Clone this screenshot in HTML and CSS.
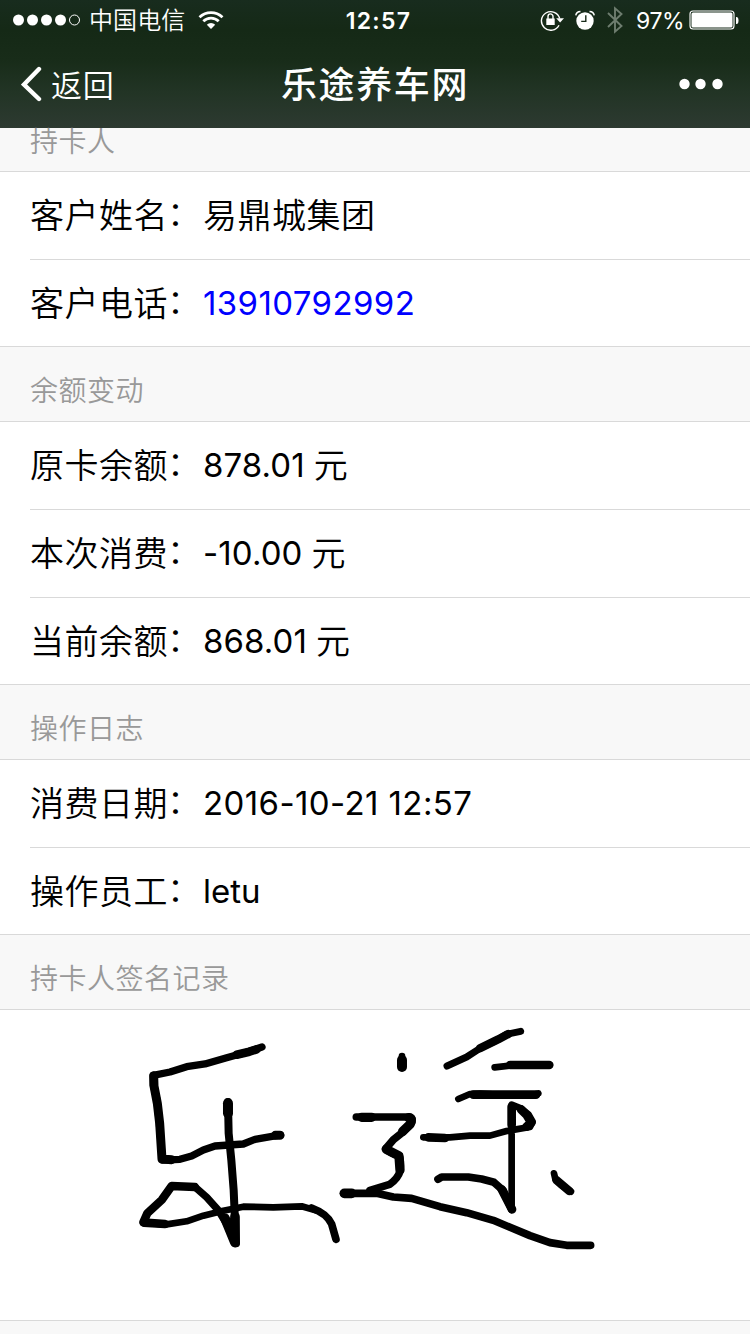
FILE: index.html
```html
<!DOCTYPE html>
<html lang="zh-CN">
<head>
<meta charset="utf-8">
<title>乐途养车网</title>
<link rel="stylesheet" href="styles.css">
</head>
<body>
<header class="top">
  <div class="status">
    <div class="status-left">
      <svg class="signal" width="68" height="12" viewBox="0 0 68 12" fill="#fff"><circle cx="5.5" cy="6" r="5.5"/><circle cx="19.5" cy="6" r="5.5"/><circle cx="33.5" cy="6" r="5.5"/><circle cx="47.5" cy="6" r="5.5"/><circle cx="61.5" cy="6" r="5" fill="none" stroke="#fff"/></svg>
      <span class="carrier">中国电信</span>
      <svg class="wifi" width="26" height="20" viewBox="0 0 26 20" fill="none" stroke="#fff" stroke-width="2.7"><path d="M1.5 7.2a16.5 16.5 0 0 1 23 0"/><path d="M5.3 11.2a11 11 0 0 1 15.4 0"/><path d="M13 19l-4.2-4.3a6 6 0 0 1 8.4 0z" fill="#fff" stroke="none"/></svg>
    </div>
    <span class="clock">12:57</span>
    <div class="status-right">
      <svg class="lock" width="24" height="22" viewBox="0 0 24 22"><path d="M19 16.200A9.300 9.300 0 1 1 19.700 9.500" fill="none" stroke="#fff" stroke-width="1.400"/><path d="M16.200 9.200H24l-3.900 4.300z" fill="#fff"/><rect x="6.300" y="9.500" width="8.400" height="6.500" fill="#fff"/><path d="M8 10V7.400a2.500 2.500 0 0 1 5 0V10" fill="none" stroke="#fff" stroke-width="1.400"/></svg>
      <svg class="alarm" width="20" height="20" viewBox="0 0 20 20"><circle cx="10" cy="11" r="8.700" fill="#fff"/><path d="M.8 5.300Q1.200 1.600 5.500 1.400M19.200 5.300Q18.800 1.600 14.500 1.400" fill="none" stroke="#fff" stroke-width="1.500"/><path d="M10.800 5.200v6.200H6.200" fill="none" stroke="#182b19" stroke-width="1.400"/></svg>
      <svg class="bluetooth" width="16" height="28" viewBox="0 0 16 28" fill="none" stroke="#6e7d6f" stroke-width="1.900"><path d="M1 7l13.500 13L8 25.600V2.400L14.500 8 1 21"/></svg>
      <span class="percent">97%</span>
      <svg class="battery" width="50" height="20" viewBox="0 0 50 20"><rect x="1" y="1" width="44" height="18" rx="3" fill="none" stroke="#fff" stroke-width="1.100"/><rect x="2.500" y="2.500" width="41" height="15" rx="1.500" fill="#fff"/><path d="M47 7h.5q2 0 2 3.500t-2 3.500H47z" fill="#fff"/></svg>
    </div>
  </div>
  <nav class="nav">
    <a class="back"><svg width="22" height="36" viewBox="0 0 22 36" fill="none" stroke="#fff" stroke-width="4.400" stroke-linecap="round"><path d="M18 3L3 18.500 18 33"/></svg><span class="back-text">返回</span></a>
    <h1 class="title">乐途养车网</h1>
    <svg class="more" width="44" height="12" viewBox="0 0 44 12" fill="#fff"><circle cx="5.500" cy="6" r="5.200"/><circle cx="21.500" cy="6" r="5.200"/><circle cx="38.500" cy="6" r="5.200"/></svg>
  </nav>
</header>
<main>
  <h2 class="section section-cut">持卡人</h2>
  <div class="group">
    <div class="row"><span class="label">客户姓名<i class="colon">：</i></span><span>易鼎城集团</span></div>
    <div class="row"><span class="label">客户电话<i class="colon">：</i></span><a class="num phone">13910792992</a></div>
  </div>
  <h2 class="section">余额变动</h2>
  <div class="group">
    <div class="row"><span class="label">原卡余额<i class="colon">：</i></span><span class="num amount">878.01</span><span>元</span></div>
    <div class="row"><span class="label">本次消费<i class="colon">：</i></span><span class="num amount">-10.00</span><span>元</span></div>
    <div class="row"><span class="label">当前余额<i class="colon">：</i></span><span class="num amount">868.01</span><span>元</span></div>
  </div>
  <h2 class="section">操作日志</h2>
  <div class="group">
    <div class="row"><span class="label">消费日期<i class="colon">：</i></span><span class="num date">2016-10-21 12:57</span></div>
    <div class="row"><span class="label">操作员工<i class="colon">：</i></span><span class="num">letu</span></div>
  </div>
  <h2 class="section">持卡人签名记录</h2>
  <div class="signature">
    <svg width="750" height="310" viewBox="0 0 750 310" fill="none" stroke="#000" stroke-linecap="round" stroke-linejoin="round">
      <g transform="translate(120) scale(.3333)" stroke-width="22">
        <path d="M426 111L385 125 320 143 255 162 200 170 150 186 100 196 100 225 111 270 118 340 127 450 180 448 215 438 250 420 285 408 370 402 405 388 482 375"/>
        <path d="M101 197L102 228 112 280 119 340 126 447 155 449M466 376L480 376" stroke-width="27"/>
        <path d="M410 118L388 125 350 134"  stroke-width="26"/>
        <path d="M324 276L326 370 334 450 341 540 348 700" stroke-width="24"/>
        <path d="M324 280L324 310" stroke-width="30"/>
        <path d="M344 700L325 650 295 601 260 562 225 531"/>
        <path d="M344 696L315 625M345 620V698" stroke-width="29"/>
        <path d="M225 531L155 528 125 570 82 610 70 637" stroke-width="25"/>
        <path d="M70 637L135 644 200 634 250 617 310 602 370 590 460 592 545 589 590 602" stroke-width="20"/>
        <path d="M72 638L135 642" stroke-width="26"/>
        <path d="M575 594Q621 611 635 642L648 688" stroke-width="23"/>
      </g>
      <g transform="translate(330) scale(.3333)" stroke-width="23">
        <path d="M216 138V174" stroke-width="20"/>
        <path d="M216 150V171" stroke-width="30"/>
        <path d="M351 168L410 141 450 115 505 88 530 73 572 64" stroke-width="21"/>
        <path d="M450 115L505 88 535 72" stroke-width="25"/>
        <path d="M494 172L545 166 660 165" stroke-width="20"/><path d="M540 165H658" stroke-width="25"/>
        <path d="M385 267L420 252 450 251 545 256 610 255 625 250" stroke-width="20"/><path d="M430 254H618" stroke-width="26"/>
        <path d="M79 321H241Q250 326 244 339L218 367 190 389 167 416Q183 431 207 437Q214 451 210 484Q204 506 179 523L120 541"/>
        <path d="M95 322H125M236 323Q250 326 240 343L218 364" stroke-width="28"/><path d="M169 418L207 438 210 480" stroke-width="28"/>
        <path d="M41 550H140L190 561 245 565 330 590 410 608 490 631 540 652 600 677 660 698 710 706H782"/>
        <path d="M43 550H65" stroke-width="29"/>
        <path d="M280 382H360L420 377 480 377 530 363 600 351 608 335 596 314 573 295 545 284 545 598" stroke-width="20"/>
        <path d="M295 382L345 384M573 298L590 315 604 338 590 350M545 290V345" stroke-width="26"/>
        <path d="M324 508L335 501H415L455 507 492 517 520 542 545 598"/><path d="M515 538L546 598" stroke-width="26"/>
        <path d="M672 490L676 507 694 526 723 545" stroke-width="20"/><path d="M679 510L718 543" stroke-width="25"/>
      </g>
    </svg>
  </div>
</main>
</body>
</html>
```
FILE: styles.css
```css
body {
  margin: 0;
  width: 750px;
  height: 1334px;
  overflow: hidden;
  background: #f8f8f8;
  color: #000;
  font-family: Inter, "Noto Sans CJK SC", sans-serif;
}
.top {
  height: 128px;
  background: linear-gradient(#182c1e 0, #152916 30px, #182c19 60px, #223425 92px, #2d3a31 128px);
  color: #fff;
}
.status {
  height: 40px;
  display: grid;
  grid-template-columns: 1fr auto 1fr;
  align-items: center;
}
.status-left, .status-right {
  display: flex;
  align-items: center;
}
.status-left { padding-left: 13px; }
.carrier {
  margin-left: 8px;
  padding-top: 2px;
  font-size: 24px;
  font-weight: 350;
  line-height: 38px;
  letter-spacing: 0.1px;
}
.wifi { margin-left: 13px; }
.clock {
  font-size: 23px;
  font-weight: 600;
  line-height: 38px;
  letter-spacing: 1.3px;
  padding: 2px 0 0 7px;
}
.status-right {
  justify-content: flex-end;
  padding-right: 11px;
}
.lock { margin-right: -1px; }
.alarm { margin-left: 12px; }
.bluetooth { margin-left: 12px; }
.percent {
  width: 48px;
  margin: 0 5px 0 13px;
  padding-top: 2px;
  font-size: 23px;
  line-height: 38px;
  letter-spacing: -0.4px;
}
.nav {
  height: 88px;
  display: grid;
  grid-template-columns: 1fr auto 1fr;
  align-items: center;
}
.back {
  display: flex;
  align-items: center;
  gap: 8px;
  padding-left: 21px;
  font-size: 31px;
  font-weight: 350;
  line-height: 85px;
}
.back-text {
  padding-top: 3px;
  letter-spacing: 0.8px;
}
.title {
  margin: 0;
  padding-top: 3px;
  font-size: 36px;
  font-weight: 500;
  line-height: 85px;
  letter-spacing: 1.6px;
}
.more {
  justify-self: end;
  margin-right: 27px;
}
.section {
  box-sizing: border-box;
  height: 74px;
  margin: 0;
  padding: 12px 30px 0;
  font-size: 28px;
  font-weight: 350;
  line-height: 64px;
  letter-spacing: 0.5px;
  color: #999;
}
.section-cut {
  height: 43px;
  padding-top: 0;
  line-height: 28px;
}
.group {
  background: #fff;
  border-top: 1px solid #d9d9d9;
  border-bottom: 1px solid #d9d9d9;
}
.row {
  height: 87px;
  display: flex;
  margin-left: 30px;
  border-bottom: 1px solid #d9d9d9;
  font-size: 34px;
  font-weight: 350;
  line-height: 88px;
  white-space: pre;
}
.row:last-child {
  height: 86px;
  border-bottom: 0;
}
.label, .row span { letter-spacing: 0.5px; }
.label { width: 173px; }
.colon {
  display: inline-block;
  margin-left: -1px;
  font-style: normal;
  line-height: 40px;
  vertical-align: 2px;
}
.num, .row span.num {
  font-size: 33px;
  font-weight: 400;
  line-height: 86px;
  letter-spacing: 0;
}
.row .phone {
  color: #00f;
  letter-spacing: 0.4px;
}
.row span.date { letter-spacing: 0.4px; }
.row span.amount {
  margin-right: 9px;
  letter-spacing: 0.1px;
}
.signature {
  height: 310px;
  background: #fff;
  border-top: 1px solid #d9d9d9;
  border-bottom: 1px solid #d9d9d9;
}
.signature svg { display: block; }
```
